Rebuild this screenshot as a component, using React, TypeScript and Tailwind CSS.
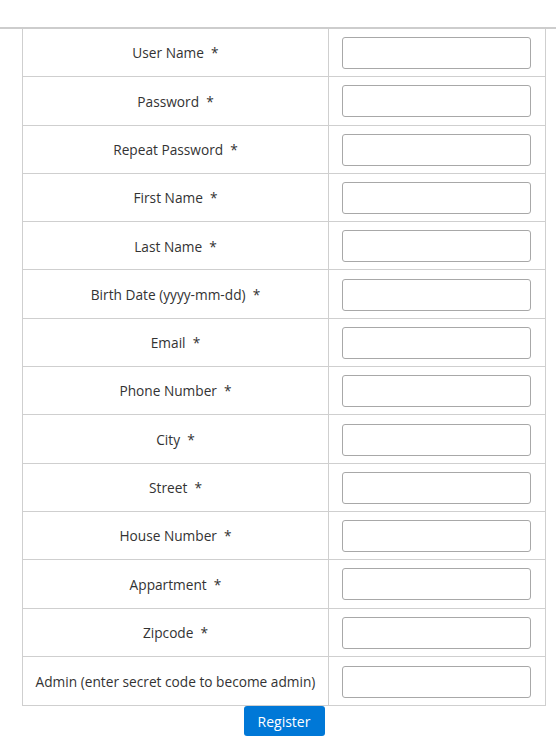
const fields = [
  { label: "User Name", required: true },
  { label: "Password", required: true },
  { label: "Repeat Password", required: true },
  { label: "First Name", required: true },
  { label: "Last Name", required: true },
  { label: "Birth Date (yyyy-mm-dd)", required: true },
  { label: "Email", required: true },
  { label: "Phone Number", required: true },
  { label: "City", required: true },
  { label: "Street", required: true },
  { label: "House Number", required: true },
  { label: "Appartment", required: true },
  { label: "Zipcode", required: true },
  { label: "Admin (enter secret code to become admin)", required: false },
];

export default function App() {
  return (
    <div className="min-h-[746px] w-[556px] bg-white text-[13.7px] text-[#333]" style={{ fontFamily: '"Open Sans", "Liberation Sans", sans-serif' }}>
      <div className="h-[27px]" />
      <div className="border-t-2 border-[#cdcdcd]" />
      <div className="ml-[22px] w-[524px] border-x border-b border-[#cfcfcf]">
        {fields.map((f, i) => (
          <div
            key={f.label}
            className={`flex h-[48.3px] ${i < fields.length - 1 ? "border-b border-[#cfcfcf]" : ""}`}
          >
            <div className="flex w-[306px] items-center justify-center border-r border-[#cfcfcf] pt-[2px]">
              <span className="whitespace-pre">
                {f.label}
                {f.required ? "  *" : ""}
              </span>
            </div>
            <div className="flex flex-1 items-center pl-[13px] pt-[1px]">
              <input className="h-[32px] w-[189px] rounded-[3px] border border-[#a8a8a8] bg-white px-2 outline-none" />
            </div>
          </div>
        ))}
      </div>
      <div className="ml-[22px] flex w-[524px] justify-center">
        <button className="h-[30px] w-[81px] rounded-[3px] bg-[#0078d7] text-[14px] text-white">
          Register
        </button>
      </div>
    </div>
  );
}
